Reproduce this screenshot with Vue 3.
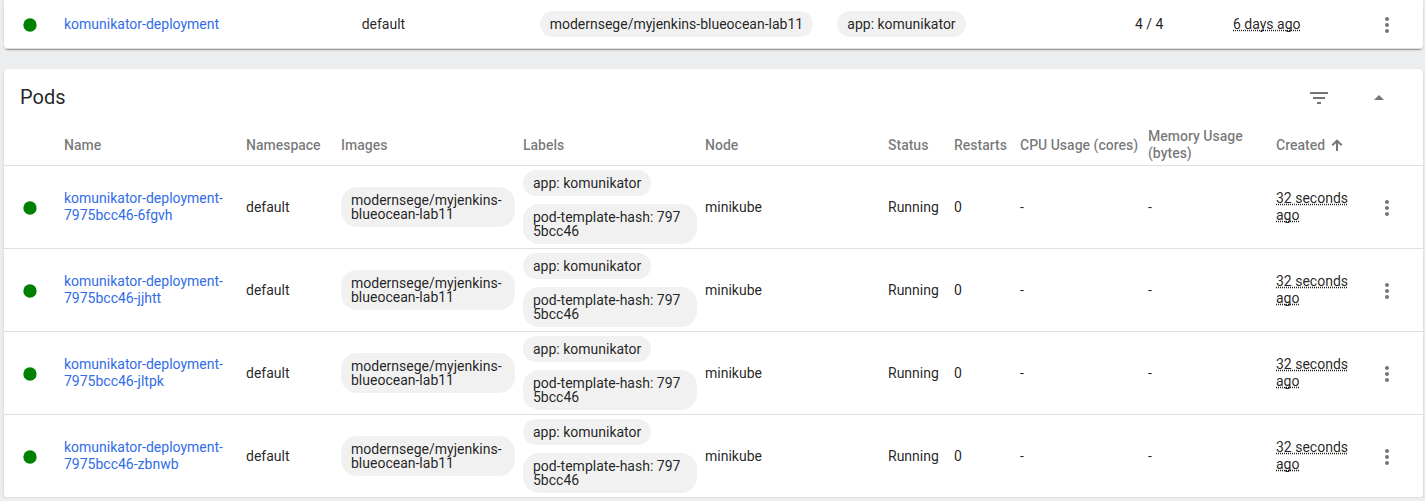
<script setup>
const pods = ['6fgvh', 'jjhtt', 'jltpk', 'zbnwb'].map((id) => ({
  name: `komunikator-deployment-7975bcc46-${id}`,
  namespace: 'default',
  image: 'modernsege/myjenkins-blueocean-lab11',
  labels: ['app: komunikator', 'pod-template-hash: 7975bcc46'],
  node: 'minikube',
  status: 'Running',
  restarts: 0,
  cpu: '-',
  memory: '-',
  created: '32 seconds ago',
}))
</script>

<template>
  <main class="page">
    <section class="card card-top" aria-label="Deployments">
      <table>
        <colgroup>
          <col class="c-icon" /><col /><col class="c-ns-wide" /><col /><col />
          <col class="c-ready" /><col class="c-age-wide" /><col class="c-menu" />
        </colgroup>
        <tbody>
          <tr class="row-single">
            <td class="state"><svg class="dot" viewBox="0 0 24 24" role="img" aria-label="Healthy"><circle cx="12" cy="12" r="10" /></svg></td>
            <td><a href="#">komunikator-deployment</a></td>
            <td>default</td>
            <td><div class="chips"><span class="chip">modernsege/myjenkins-blueocean-lab11</span></div></td>
            <td><div class="chips"><span class="chip">app: komunikator</span></div></td>
            <td>4 / 4</td>
            <td><span class="age">6 days ago</span></td>
            <td class="menu">
              <button class="icon-btn" type="button" aria-label="Deployment actions">
                <svg viewBox="0 0 24 24"><path d="M12 8c1.1 0 2-.9 2-2s-.9-2-2-2-2 .9-2 2 .9 2 2 2zm0 2c-1.1 0-2 .9-2 2s.9 2 2 2 2-.9 2-2-.9-2-2-2zm0 6c-1.1 0-2 .9-2 2s.9 2 2 2 2-.9 2-2-.9-2-2-2z" /></svg>
              </button>
            </td>
          </tr>
        </tbody>
      </table>
    </section>

    <section class="card card-pods" aria-labelledby="pods-title">
      <header class="bar">
        <h2 id="pods-title">Pods</h2>
        <div class="tools">
          <button class="icon-btn" type="button" aria-label="Filter">
            <svg viewBox="0 0 24 24"><path d="M10 18h4v-2h-4v2zM3 6v2h18V6H3zm3 7h12v-2H6v2z" /></svg>
          </button>
          <button class="icon-btn" type="button" aria-label="Collapse">
            <svg viewBox="0 0 24 24"><path d="M7 14l5-5 5 5z" /></svg>
          </button>
        </div>
      </header>
      <table>
        <colgroup>
          <col class="c-icon" /><col /><col class="c-age" /><col /><col /><col class="c-node" />
          <col class="c-short" /><col class="c-short" /><col class="c-usage" /><col class="c-usage" />
          <col class="c-age" /><col class="c-menu" />
        </colgroup>
        <thead>
          <tr>
            <th></th>
            <th scope="col">Name</th>
            <th scope="col">Namespace</th>
            <th scope="col">Images</th>
            <th scope="col">Labels</th>
            <th scope="col">Node</th>
            <th scope="col">Status</th>
            <th scope="col">Restarts</th>
            <th scope="col" class="nowrap">CPU Usage (cores)</th>
            <th scope="col">Memory Usage (bytes)</th>
            <th scope="col" aria-sort="ascending">
              <button class="sort" type="button">
                Created
                <svg viewBox="0 0 12 12"><path d="M5 12V4L2 7 .6 5.600 6 .2l5.400 5.400L10 7 7 4v8z" /></svg>
              </button>
            </th>
            <th></th>
          </tr>
        </thead>
        <tbody>
          <tr v-for="pod in pods" :key="pod.name">
            <td class="state"><svg class="dot" viewBox="0 0 24 24" role="img" aria-label="Running"><circle cx="12" cy="12" r="10" /></svg></td>
            <td><a href="#">{{ pod.name }}</a></td>
            <td>{{ pod.namespace }}</td>
            <td><div class="chips"><span class="chip">{{ pod.image }}</span></div></td>
            <td>
              <div class="chips"><span v-for="label in pod.labels" :key="label" class="chip chip-label">{{ label }}</span></div>
            </td>
            <td>{{ pod.node }}</td>
            <td>{{ pod.status }}</td>
            <td>{{ pod.restarts }}</td>
            <td>{{ pod.cpu }}</td>
            <td>{{ pod.memory }}</td>
            <td><span class="age">{{ pod.created }}</span></td>
            <td class="menu">
              <button class="icon-btn" type="button" :aria-label="`Actions for ${pod.name}`">
                <svg viewBox="0 0 24 24"><path d="M12 8c1.1 0 2-.9 2-2s-.9-2-2-2-2 .9-2 2 .9 2 2 2zm0 2c-1.1 0-2 .9-2 2s.9 2 2 2 2-.9 2-2-.9-2-2-2zm0 6c-1.1 0-2 .9-2 2s.9 2 2 2 2-.9 2-2-.9-2-2-2z" /></svg>
              </button>
            </td>
          </tr>
        </tbody>
      </table>
    </section>
  </main>
</template>

<style>
body {
  margin: 0;
  background: #edeef0;
}
</style>

<style scoped>
.page {
  display: flex;
  flex-direction: column;
  gap: 20px;
  padding: 0 2px 0 4px;
  font: 14px/17px Roboto, "Liberation Sans", sans-serif;
  color: rgba(0, 0, 0, 0.87);
}
.card {
  background: #fff;
  border-radius: 4px;
  box-shadow: 0 2px 1px -1px rgba(0, 0, 0, 0.2), 0 1px 1px rgba(0, 0, 0, 0.14), 0 1px 3px rgba(0, 0, 0, 0.12);
}
.card-top {
  border-radius: 0 0 4px 4px;
}
.bar {
  display: flex;
  align-items: center;
  justify-content: space-between;
  height: 56px;
  padding: 0 32px 0 16px;
}
h2 {
  margin: 0;
  font-size: 20px;
  line-height: 24px;
  font-weight: 400;
}
.tools {
  display: flex;
  gap: 36px;
  padding-top: 2px;
}
table {
  width: 100%;
  table-layout: fixed;
  border-collapse: separate;
  border-spacing: 0;
}
.c-icon { width: 60px; }
.c-age { width: 95px; }
.c-node { width: 183px; }
.c-short { width: 66px; }
.c-usage { width: 128px; }
.c-menu { width: 52px; }
.c-ns-wide { width: 178px; }
.c-ready { width: 98px; }
.c-age-wide { width: 138px; }
th,
td {
  padding: 0 8px 0 0;
  text-align: left;
  vertical-align: middle;
  border-bottom: 1px solid #e0e0e0;
}
th {
  height: 40px;
  padding: 0;
  font-weight: 500;
  color: rgba(0, 0, 0, 0.54);
}
.nowrap {
  white-space: nowrap;
}
.row-single td {
  height: 48px;
  box-sizing: content-box;
}
.row-single .state,
.row-single .menu {
  height: 46px;
}
.state {
  padding: 2px 0 0 18px;
}
.menu {
  padding: 2px 0 0 4px;
}
.dot {
  display: block;
  width: 16px;
  height: 16px;
  fill: #008000;
}
a {
  color: #326de6;
  text-decoration: none;
}
.chips {
  display: flex;
  flex-direction: column;
  align-items: flex-start;
  gap: 8px;
  padding: 4px 0;
}
.chip {
  padding: 6px 10px;
  border-radius: 16px;
  background: #f1f1f1;
  line-height: 14px;
}
.chip-label {
  word-break: break-all;
}
.age {
  text-decoration: underline dotted;
  text-decoration-skip-ink: none;
}
.icon-btn {
  display: block;
  width: 24px;
  height: 24px;
  margin: 0;
  padding: 0;
  border: 0;
  background: none;
  color: rgba(0, 0, 0, 0.54);
  cursor: pointer;
}
.icon-btn svg {
  display: block;
  width: 24px;
  height: 24px;
  fill: currentColor;
}
.sort {
  display: flex;
  align-items: center;
  gap: 6px;
  padding: 0;
  border: 0;
  background: none;
  font: inherit;
  color: inherit;
  cursor: pointer;
}
.sort svg {
  width: 12px;
  height: 12px;
  fill: currentColor;
}
</style>
